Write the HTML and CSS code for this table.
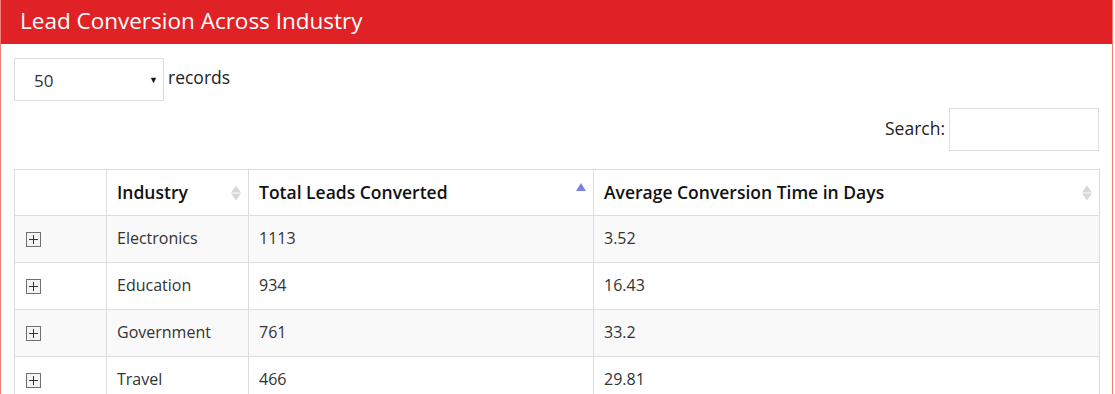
FILE: index.html
```html
<!DOCTYPE html>
<html>
<head>
<meta charset="utf-8">
<link rel="stylesheet" href="styles.css">
</head>
<body>
<div class="panel">
  <div class="panel-heading">Lead Conversion Across Industry</div>
  <div class="panel-body">
    <div class="length-row">
      <div class="select"><span class="select-val">50</span><span class="caret">&#9660;</span></div>
      <span class="records">records</span>
    </div>
    <div class="search-row">
      <label class="search-label">Search:</label>
      <div class="search-input"></div>
    </div>
    <table class="grid">
      <thead>
        <tr>
          <th class="c0"></th>
          <th class="c1 sortable">Industry<span class="sort both"><i class="up"></i><i class="down"></i></span></th>
          <th class="c2 sortable">Total Leads Converted<span class="sort asc"><i class="up"></i></span></th>
          <th class="c3 sortable">Average Conversion Time in Days<span class="sort both"><i class="up"></i><i class="down"></i></span></th>
        </tr>
      </thead>
      <tbody>
        <tr class="odd"><td><span class="plus"></span></td><td>Electronics</td><td>1113</td><td>3.52</td></tr>
        <tr><td><span class="plus"></span></td><td>Education</td><td>934</td><td>16.43</td></tr>
        <tr class="odd"><td><span class="plus"></span></td><td>Government</td><td>761</td><td>33.2</td></tr>
        <tr><td><span class="plus"></span></td><td>Travel</td><td>466</td><td>29.81</td></tr>
      </tbody>
    </table>
  </div>
</div>
</body>
</html>
```

FILE: styles.css
```css
html, body {
  margin: 0;
  padding: 0;
  background: #fff;
  font-family: "Open Sans", "Liberation Sans", sans-serif;
  font-size: 16px;
  color: #333;
}
.panel {
  width: 1111px;
  border: 1px solid #f08078;
  border-top: 0;
  height: 394px;
  overflow: hidden;
}
.panel-heading {
  background: #e02226;
  color: #fff;
  font-size: 22.5px;
  line-height: 30px;
  height: 44px;
  box-sizing: border-box;
  padding: 6px 19px 8px;
}
.panel-body {
  padding: 14px 12px 0 13px;
}
.length-row {
  display: flex;
  align-items: center;
  gap: 4px;
  height: 43px;
}
.select {
  width: 150px;
  height: 43px;
  box-sizing: border-box;
  border: 1px solid #ddd;
  display: flex;
  align-items: center;
  justify-content: space-between;
  padding: 2px 5px 0 19px;
  color: #333;
  font-size: 17px;
}
.caret {
  font-size: 9px;
  color: #111;
  margin-top: -2px;
}
.records {
  color: #222;
  font-size: 17.5px;
  margin-top: -5px;
}
.search-row {
  display: flex;
  justify-content: flex-end;
  align-items: center;
  gap: 4px;
  margin-top: 7px;
  padding-right: 1px;
}
.search-label {
  color: #222;
  font-size: 17.5px;
  margin-top: -4px;
}
.search-input {
  width: 150px;
  height: 43px;
  box-sizing: border-box;
  border: 1px solid #ddd;
}
.grid {
  margin-top: 18px;
  width: 1086px;
  border-collapse: collapse;
  table-layout: fixed;
}
.grid th, .grid td {
  border: 1px solid #ddd;
  padding: 11px 10px 13px;
  line-height: 22px;
  text-align: left;
  vertical-align: middle;
}
.grid th {
  font-weight: 600;
  font-size: 17.5px;
  color: #111;
  padding-top: 11px;
  padding-bottom: 12px;
  position: relative;
}
.c0 { width: 71px; }
.c1 { width: 121px; }
.c2 { width: 324px; }
.grid tbody td { color: #333; }
.grid tr.odd td { background: #f9f9f9; }
.sort {
  position: absolute;
  right: 7px;
  top: 50%;
  transform: translateY(-50%);
  display: flex;
  flex-direction: column;
  gap: 1px;
}
.sort i {
  display: block;
  width: 0;
  height: 0;
  border-left: 5px solid transparent;
  border-right: 5px solid transparent;
}
.sort.both .up { border-bottom: 7px solid #d8d8d8; }
.sort.both .down { border-top: 7px solid #d8d8d8; }
.sort.asc { margin-top: -6px; }
.sort.asc .up { border-bottom: 8px solid #7d7fe8; }
.plus {
  display: block;
  width: 15px;
  height: 15px;
  box-sizing: border-box;
  border: 1px solid #707070;
  position: relative;
  margin-left: 1px;
  margin-top: 3px;
  background: #f4f4f4;
}
.plus::before, .plus::after {
  content: "";
  position: absolute;
  background: #333;
}
.plus::before { left: 2px; right: 2px; top: 6px; height: 1px; }
.plus::after { top: 2px; bottom: 2px; left: 6px; width: 1px; }
```
